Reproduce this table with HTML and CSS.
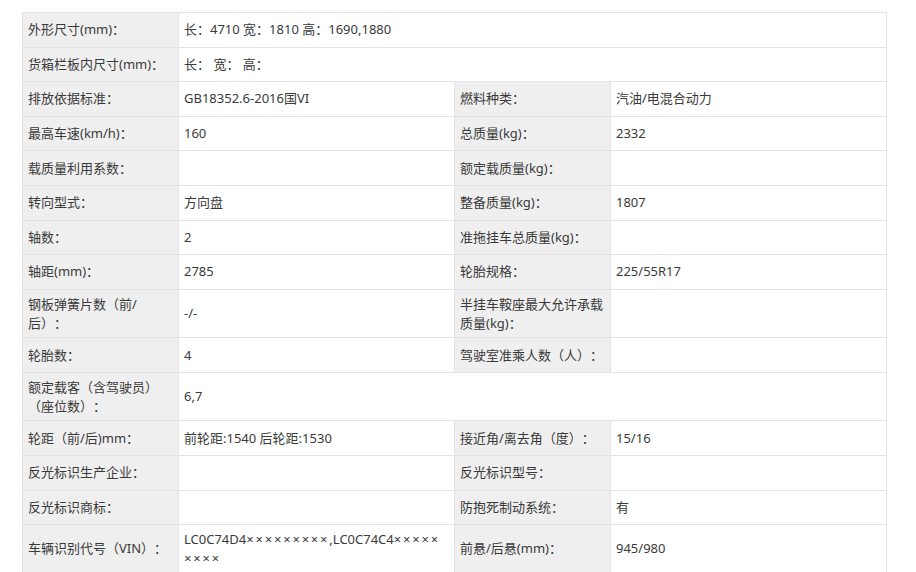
FILE: index.html
```html
<!DOCTYPE html>
<html lang="zh-CN">
<head>
<meta charset="utf-8">
<title>车辆参数</title>
<link rel="stylesheet" href="styles.css">
</head>
<body>
<div class="page">
  <table class="spec">
    <colgroup>
      <col class="c-label"><col class="c-value"><col class="c-label"><col class="c-value">
    </colgroup>
    <tbody>
      <tr><th>外形尺寸(mm)：</th><td colspan="3">长：4710 宽：1810 高：1690,1880</td></tr>
      <tr><th>货箱栏板内尺寸(mm)：</th><td colspan="3">长： 宽： 高：</td></tr>
      <tr><th>排放依据标准：</th><td>GB18352.6-2016国VI</td><th>燃料种类：</th><td>汽油/电混合动力</td></tr>
      <tr><th>最高车速(km/h)：</th><td>160</td><th>总质量(kg)：</th><td>2332</td></tr>
      <tr><th>载质量利用系数：</th><td></td><th>额定载质量(kg)：</th><td></td></tr>
      <tr><th>转向型式：</th><td>方向盘</td><th>整备质量(kg)：</th><td>1807</td></tr>
      <tr><th>轴数：</th><td>2</td><th>准拖挂车总质量(kg)：</th><td></td></tr>
      <tr><th>轴距(mm)：</th><td>2785</td><th>轮胎规格：</th><td>225/55R17</td></tr>
      <tr class="tall"><th>钢板弹簧片数（前/后）：</th><td>-/-</td><th>半挂车鞍座最大允许承载质量(kg)：</th><td></td></tr>
      <tr><th>轮胎数：</th><td>4</td><th>驾驶室准乘人数（人）：</th><td></td></tr>
      <tr class="tall"><th>额定载客（含驾驶员）（座位数）：</th><td colspan="3">6,7</td></tr>
      <tr><th>轮距（前/后)mm：</th><td>前轮距:1540 后轮距:1530</td><th>接近角/离去角（度）：</th><td>15/16</td></tr>
      <tr><th>反光标识生产企业：</th><td></td><th>反光标识型号：</th><td></td></tr>
      <tr><th>反光标识商标：</th><td></td><th>防抱死制动系统：</th><td>有</td></tr>
      <tr class="tall"><th>车辆识别代号（VIN）：</th><td>LC0C74D4<span class="mask">×××××××××</span>,LC0C74C4<span class="mask">×××××</span><br><span class="mask">××××</span></td><th>前悬/后悬(mm)：</th><td>945/980</td></tr>
    </tbody>
  </table>
</div>
</body>
</html>
```

FILE: styles.css
```css
html, body {
  margin: 0;
  padding: 0;
  background: #ffffff;
}

.page {
  padding: 12px 0 0 22px;
}

.spec {
  width: 865px;
  table-layout: fixed;
  border-collapse: collapse;
  font-family: "Noto Sans", "Noto Sans CJK SC", sans-serif;
  font-size: 13px;
  line-height: 19px;
  color: #3a3a3a;
  text-spacing-trim: space-all;
}

.c-label { width: 156px; }
.c-value { width: 276px; }

.spec th,
.spec td {
  border: 1px solid #e4e4e4;
  height: 34.6px;
  padding: 0 6px 0 5px;
  box-sizing: border-box;
  text-align: left;
  vertical-align: middle;
  font-weight: normal;
}

.spec th {
  background: #efefef;
}

.spec td {
  background: #ffffff;
}

.spec tr.tall th,
.spec tr.tall td {
  height: 48.5px;
  padding-top: 4px;
  padding-bottom: 4px;
}

.mask {
  letter-spacing: 1.8px;
}
```
